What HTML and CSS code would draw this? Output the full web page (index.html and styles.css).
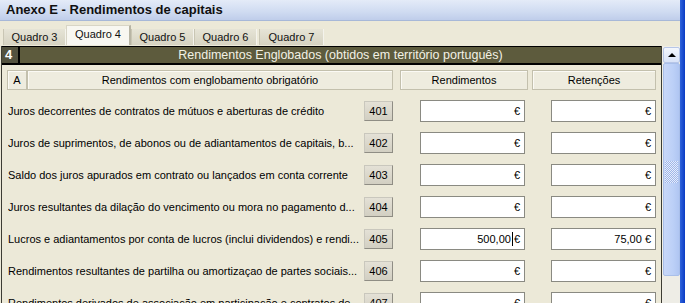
FILE: index.html
```html
<!DOCTYPE html>
<html lang="pt">
<head>
    <meta charset="UTF-8">
    <title>Anexo E</title>
    <link rel="stylesheet" href="styles.css">
</head>
<body>
<div id="window">
    <div id="main">
        <div id="title-bar">Anexo E - Rendimentos de capitais</div>
        <ul id="tab-box">
            <li>Quadro 3</li>
            <li class="selected">Quadro 4</li>
            <li>Quadro 5</li>
            <li>Quadro 6</li>
            <li>Quadro 7</li>
        </ul>
        <div id="panel">
            <div id="form">
                <div class="section-head">
                    <span class="num">4</span>
                    <span class="head-title">Rendimentos Englobados (obtidos em território português)</span>
                </div>
                <div class="head-row">
                    <span class="cell letter">A</span>
                    <span class="cell group">Rendimentos com englobamento obrigatório</span>
                    <span class="cell col1">Rendimentos</span>
                    <span class="cell col2">Retenções</span>
                </div>
                <div class="row">
                    <span class="label">Juros decorrentes de contratos de mútuos e aberturas de crédito</span>
                    <span class="code">401</span>
                    <span class="field">€</span>
                    <span class="field">€</span>
                </div>
                <div class="row">
                    <span class="label">Juros de suprimentos, de abonos ou de adiantamentos de capitais, b...</span>
                    <span class="code">402</span>
                    <span class="field">€</span>
                    <span class="field">€</span>
                </div>
                <div class="row">
                    <span class="label">Saldo dos juros apurados em contrato ou lançados em conta corrente</span>
                    <span class="code">403</span>
                    <span class="field">€</span>
                    <span class="field">€</span>
                </div>
                <div class="row">
                    <span class="label">Juros resultantes da dilação do vencimento ou mora no pagamento d...</span>
                    <span class="code">404</span>
                    <span class="field">€</span>
                    <span class="field">€</span>
                </div>
                <div class="row">
                    <span class="label">Lucros e adiantamentos por conta de lucros (inclui dividendos) e rendi...</span>
                    <span class="code">405</span>
                    <span class="field">500,00<i class="caret"></i>€</span>
                    <span class="field">75,00 €</span>
                </div>
                <div class="row">
                    <span class="label">Rendimentos resultantes de partilha ou amortizaçao de partes sociais...</span>
                    <span class="code">406</span>
                    <span class="field">€</span>
                    <span class="field">€</span>
                </div>
                <div class="row">
                    <span class="label">Rendimentos derivados de associação em participação e contratos de...</span>
                    <span class="code">407</span>
                    <span class="field">€</span>
                    <span class="field">€</span>
                </div>
            </div>
            <div id="scrollbar">
                <div class="arrow-btn"><span class="up"></span></div>
                <div class="thumb"><span class="grip"></span></div>
                <div class="track"></div>
            </div>
        </div>
    </div>
    <div id="edge"></div>
</div>
</body>
</html>
```

FILE: styles.css
```css
*{
    margin: 0px;
    padding: 0px;
    box-sizing: border-box;
}
ul{
    list-style: none;
}
body{
    width: 685px;
    height: 303px;
    overflow: hidden;
    background: #ece9d8;
    font-family: "Liberation Sans", Arial, sans-serif;
    font-size: 11px;
    color: #000;
}
#window{
    display: flex;
    height: 303px;
}
#main{
    width: 680px;
    display: flex;
    flex-direction: column;
}
#edge{
    width: 5px;
    background: linear-gradient(to right, #2f63dc, #0a3cc4);
}
#title-bar{
    height: 21px;
    padding-left: 6px;
    line-height: 20px;
    font-size: 13px;
    font-weight: bold;
    color: #101010;
    background: linear-gradient(#e4ebf8, #cfdbf1 60%, #bfcdea);
    border-bottom: 1px solid #a7b8d8;
}
#tab-box{
    height: 25px;
    display: flex;
    align-items: flex-end;
    padding: 0 0 1px 3px;
}
#tab-box li{
    height: 16px;
    line-height: 16px;
    width: 63px;
    text-align: center;
    background: linear-gradient(#e6e4d6, #d6d3c2);
    border-right: 1px solid #f4f3ec;
    border-left: 1px solid #c9c6b4;
    color: #111;
}
#tab-box li.selected{
    height: 20px;
    line-height: 16px;
    width: 65px;
    background: #f8f7f1;
    border: 1px solid #d8d5c6;
    border-bottom: none;
    border-right: 2px solid #b8b5a4;
}
#tab-box li:last-child{
    margin-left: 2px;
    width: 65px;
}
#panel{
    flex: 1;
    display: flex;
    padding-left: 1px;
    overflow: hidden;
}
#form{
    width: 661px;
    border-left: 1px solid #3c3c34;
    border-right: 1px solid #3c3c34;
}
.section-head{
    display: flex;
    height: 19px;
    border-top: 1px solid #000;
    border-bottom: 2px solid #000;
    background: #5d5b3d;
    color: #f2f1e4;
    font-size: 12.5px;
    line-height: 16px;
}
.section-head .num{
    width: 18px;
    padding-left: 3px;
    font-weight: bold;
    font-size: 13px;
    color: #fff;
    background: #53523f;
    border-right: 2px solid #000;
}
.section-head .head-title{
    flex: 1;
    text-align: center;
}
.head-row{
    display: flex;
    margin: 5px 0 5px 5px;
    height: 20px;
}
.cell{
    height: 20px;
    line-height: 18px;
    text-align: center;
    border: 1px solid #c3c0ad;
    box-shadow: inset 1px 1px 0 #fbfaf5;
    background: #eeecdf;
}
.letter{
    width: 20px;
}
.group{
    width: 366px;
}
.col1{
    width: 128px;
    margin-left: 7px;
}
.col2{
    width: 124px;
    margin-left: 4px;
}
.row{
    display: grid;
    grid-template-columns: 356px 56px 131px 105px;
    align-items: center;
    height: 32px;
    padding-left: 6px;
}
.label{
    white-space: nowrap;
    overflow: hidden;
}
.code{
    width: 29px;
    height: 20px;
    line-height: 18px;
    text-align: center;
    background: linear-gradient(#e4e1d6, #d2cfc2);
    border: 1px solid #8f8d84;
    border-top-color: #c9c7bd;
    border-left-color: #c9c7bd;
}
.field{
    width: 105px;
    height: 22px;
    line-height: 20px;
    padding-right: 4px;
    text-align: right;
    background: #fff;
    border: 1px solid #8a8a82;
}
.caret{
    display: inline-block;
    width: 1px;
    height: 14px;
    margin: 0 1px -3px 1px;
    background: #000;
}
#scrollbar{
    width: 18px;
    display: flex;
    flex-direction: column;
    background: #f1efe6;
    padding: 1px 0 0 1px;
}
.arrow-btn{
    height: 16px;
    background: linear-gradient(#f4f7fd, #d9e3f8);
    border: 1px solid #b7c6e8;
    border-radius: 2px;
    display: flex;
    align-items: center;
    justify-content: center;
}
.up{
    width: 0;
    height: 0;
    border-left: 4px solid transparent;
    border-right: 4px solid transparent;
    border-bottom: 4px solid #000;
}
.thumb{
    height: 213px;
    background: linear-gradient(to right, #c8d7f8, #bcd0f7 60%, #b0c6f2);
    border: 1px solid #a9bfe9;
    border-radius: 2px;
    display: flex;
    align-items: center;
    justify-content: center;
}
.grip{
    width: 13px;
    height: 22px;
    margin-top: 4px;
    background: repeating-conic-gradient(#9fb6e8 0 25%, #e6edfc 0 50%) 0 0 / 2px 2px;
}
.track{
    flex: 1;
    background: #eeede6;
}
```
